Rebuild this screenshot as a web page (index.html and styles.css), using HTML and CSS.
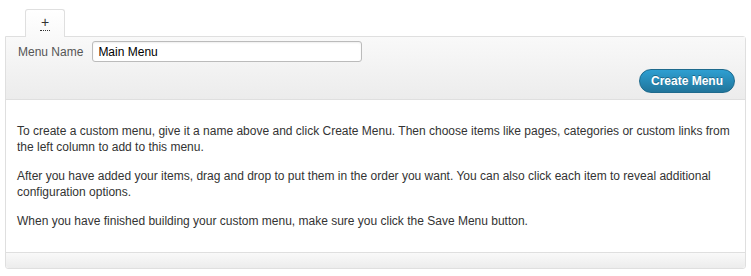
FILE: index.html
```html
<!DOCTYPE html>
<html lang="en">
<head>
  <title>Menus</title>
  <meta charset="UTF-8">
  <link rel="stylesheet" href="styles.css">
</head>
<body>
  <div class="tabs">
    <span class="tab"><abbr title="Add menu">+</abbr></span>
  </div>

  <div class="menu-box">
    <div class="menu-header">
      <label class="name-row">
        <span class="name-label">Menu Name</span>
        <input class="name-input" type="text" value="Main Menu">
      </label>
      <div class="actions">
        <button class="create-btn">Create Menu</button>
      </div>
    </div>

    <div class="menu-body">
      <p>To create a custom menu, give it a name above and click Create Menu. Then choose items like pages, categories or custom links from the left column to add to this menu.</p>
      <p>After you have added your items, drag and drop to put them in the order you want. You can also click each item to reveal additional configuration options.</p>
      <p>When you have finished building your custom menu, make sure you click the Save Menu button.</p>
    </div>

    <div class="menu-footer"></div>
  </div>
</body>
</html>
```

FILE: styles.css
```css
body {
  font-family: "Liberation Sans", Arial, sans-serif;
  font-size: 12px;
  color: #333;
  margin: 0;
  padding: 9px 5px 0 5px;
  background: #fff;
}
.tabs {
  display: flex;
  padding-left: 20px;
  height: 27px;
}
.tab {
  display: flex;
  justify-content: center;
  width: 38px;
  border: 1px solid #dfdfdf;
  border-bottom: none;
  border-radius: 3px 3px 0 0;
  background: linear-gradient(#fff, #f9f9f9);
  margin-bottom: -1px;
  position: relative;
  z-index: 1;
}
.tab abbr {
  text-decoration: none;
  border-bottom: 1px dotted #333;
  color: #333;
  font-size: 14px;
  line-height: 13px;
  height: 14px;
  margin-top: 6px;
  padding: 0 1px;
}
.menu-box {
  width: 739px;
  border: 1px solid #dfdfdf;
  border-radius: 0 3px 3px 3px;
  background: #fff;
}
.menu-header {
  background: linear-gradient(#f9f9f9, #ececec);
  border-bottom: 1px solid #dfdfdf;
  padding: 4px 10px 6px 11px;
  height: 52px;
}
.name-row {
  display: flex;
  align-items: center;
  gap: 9px;
}
.name-label {
  color: #555;
  margin-left: 1px;
}
.name-input {
  width: 270px;
  height: 21px;
  box-sizing: border-box;
  border: 1px solid #bbb;
  border-radius: 3px;
  padding: 2px 5px;
  font-family: inherit;
  font-size: 12px;
  color: #000;
  background: #fff;
  box-shadow: inset 0 1px 2px rgba(0,0,0,0.07);
}
.actions {
  display: flex;
  justify-content: flex-end;
  margin-top: 7px;
}
.create-btn {
  font-family: inherit;
  font-size: 12px;
  font-weight: bold;
  color: #fff;
  border: 1px solid #1e6a8d;
  border-radius: 12px;
  background: linear-gradient(#2e9fd2, #21759b);
  padding: 0 11px;
  height: 24px;
  text-shadow: 0 -1px 0 rgba(0,0,0,0.3);
  cursor: pointer;
}
.menu-body {
  padding: 10px 12px 10px 11px;
}
.menu-body p {
  margin: 13px 0;
  line-height: 16px;
}
.menu-footer {
  height: 15px;
  border-top: 1px solid #dfdfdf;
  background: linear-gradient(#f9f9f9, #ececec);
  border-radius: 0 0 3px 3px;
}
```
